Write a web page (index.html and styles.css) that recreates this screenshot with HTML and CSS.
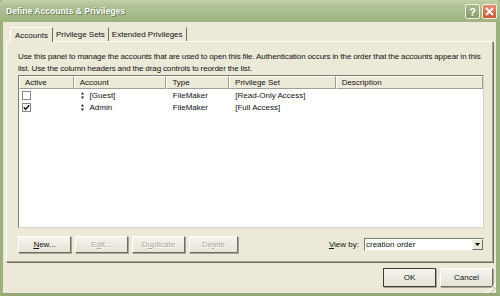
FILE: index.html
```html
<!DOCTYPE html>
<html>
<head>
<meta charset="utf-8">
<link rel="stylesheet" href="styles.css">
</head>
<body>
<div class="window">
  <div class="titlebar">
    <span class="title">Define Accounts &amp; Privileges</span>
    <div class="tb-buttons">
      <span class="tb-btn help">?</span>
      <span class="tb-btn close"><svg width="9" height="9" viewBox="0 0 9 9"><path d="M1 1 L8 8 M8 1 L1 8" stroke="#fff" stroke-width="2"/></svg></span>
    </div>
  </div>
  <div class="client">
    <div class="tabs">
      <span class="tab active">Accounts</span>
      <span class="tab">Privilege Sets</span>
      <span class="tab">Extended Privileges</span>
    </div>
    <div class="panel">
      <p class="intro">Use this panel to manage the accounts that are used to open this file. Authentication occurs in the order that the accounts appear in this<br>list. Use the column headers and the drag controls to reorder the list.</p>
      <div class="list">
        <div class="row head">
          <span class="c c1">Active</span>
          <span class="c c2">Account</span>
          <span class="c c3">Type</span>
          <span class="c c4">Privilege Set</span>
          <span class="c c5">Description</span>
        </div>
        <div class="row">
          <span class="c c1"><span class="cb"></span></span>
          <span class="c c2"><svg class="drag" width="3" height="7" viewBox="0 0 3 7"><path d="M1.5 0 L3 2.5 L0 2.5 Z M1.5 7 L3 4.5 L0 4.5 Z" fill="#222"/></svg>[Guest]</span>
          <span class="c c3">FileMaker</span>
          <span class="c c4">[Read-Only Access]</span>
          <span class="c c5"></span>
        </div>
        <div class="row">
          <span class="c c1"><span class="cb"><svg width="7" height="7" viewBox="0 0 7 7"><path d="M0.8 3.2 L2.6 5.2 L6.2 1.2" stroke="#222" stroke-width="1.6" fill="none"/></svg></span></span>
          <span class="c c2"><svg class="drag" width="3" height="7" viewBox="0 0 3 7"><path d="M1.5 0 L3 2.5 L0 2.5 Z M1.5 7 L3 4.5 L0 4.5 Z" fill="#222"/></svg>Admin</span>
          <span class="c c3">FileMaker</span>
          <span class="c c4">[Full Access]</span>
          <span class="c c5"></span>
        </div>
      </div>
      <div class="actions">
        <span class="btn"><u>N</u>ew...</span>
        <span class="btn disabled">E<u>d</u>it...</span>
        <span class="btn disabled">D<u>u</u>plicate</span>
        <span class="btn disabled narrow">De<u>l</u>ete</span>
        <span class="spacer"></span>
        <span class="viewby"><u>V</u>iew by:</span>
        <span class="combo"><span class="combo-text">creation order</span><span class="combo-btn"><svg width="5" height="3" viewBox="0 0 5 3"><path d="M0 0 L5 0 L2.5 3 Z" fill="#000"/></svg></span></span>
      </div>
    </div>
    <div class="footer">
      <span class="btn default">OK</span>
      <span class="btn">Cancel</span>
    </div>
  </div>
  <div class="grip"></div>
</div>
</body>
</html>
```

FILE: styles.css
```css
* { box-sizing: border-box; }
html, body { margin: 0; padding: 0; }
body {
  width: 500px;
  height: 296px;
  overflow: hidden;
  font-family: "Liberation Sans", Arial, sans-serif;
  font-size: 8px;
  color: #111;
  background: #ece9d8;
}
.window {
  position: relative;
  width: 500px;
  height: 296px;
  display: flex;
  flex-direction: column;
  background: #ece9d8;
  border-left: 3px solid #9cb07c;
  border-right: 4px solid #9cb07c;
  border-bottom: 3px solid #93a874;
}
.titlebar {
  height: 22px;
  margin: 0 -4px 0 -3px;
  padding: 0 3px 0 6px;
  display: flex;
  align-items: center;
  justify-content: space-between;
  background: linear-gradient(#c2d1a8 0%, #aec193 30%, #a6ba89 70%, #9db17f 100%);
  border-radius: 4px 4px 0 0;
}
.title {
  color: #fff;
  font-family: "Liberation Sans", Arial, sans-serif;
  font-weight: bold;
  font-size: 8.6px;
  text-shadow: 1px 1px 0 #6e7f55, 0 0 1px #7c8d62;
}
.tb-buttons { display: flex; gap: 2px; margin-top: 1px; }
.tb-btn {
  width: 15px;
  height: 15px;
  border: 1px solid #eef2e4;
  border-radius: 2px;
  display: flex;
  align-items: center;
  justify-content: center;
  color: #fff;
  font-weight: bold;
  font-size: 11px;
}
.help { background: linear-gradient(#a7bb8f, #849d68); }
.close { background: linear-gradient(#e58d72, #c95635); }
.client {
  flex: 1;
  display: flex;
  flex-direction: column;
  padding: 4px 3px 0 3px;
}
.tabs {
  display: flex;
  height: 15px;
  padding-left: 4px;
  align-items: flex-end;
}
.tab {
  height: 14px;
  padding: 0 3px;
  display: flex;
  align-items: center;
  border-right: 1px solid #716f64;
  border-top: 1px solid #ece9d8;
  white-space: nowrap;
  font-size: 8px;
}
.tab.active {
  height: 15px;
  padding: 0 4px 0 4px;
  border-left: 1px solid #fff;
  border-top: 1px solid #fff;
  margin-bottom: -1px;
  background: #ece9d8;
  position: relative;
  z-index: 1;
}
.panel {
  height: 221px;
  border: 1px solid #a6a393;
  border-top-color: #fff;
  border-left-color: #fff;
  box-shadow: 1px 1px 0 #716f64;
  padding: 9px 8px 0 11px;
  display: flex;
  flex-direction: column;
}
.intro {
  margin: 0;
  line-height: 12px;
  font-size: 8px;
  letter-spacing: -0.09px;
  word-spacing: -0.2px;
  white-space: nowrap;
  height: 23px;
}
.list {
  margin-top: 1px;
  height: 153px;
  background: #fff;
  border: 1px solid #7f7d72;
  border-right-color: #d6d3c6;
  border-bottom-color: #d6d3c6;
  padding: 0 1px;
}
.row {
  display: flex;
  height: 12px;
  align-items: center;
}
.row.head {
  height: 13px;
  background: #ece9d8;
  margin: 0 -1px 0 -1px;
}
.head .c {
  height: 13px;
  border-right: 1px solid #a09e92;
  border-bottom: 1px solid #a09e92;
  border-top: 1px solid #fff;
  border-left: 1px solid #fff;
  padding-left: 5px;
}
.c {
  display: flex;
  align-items: center;
  white-space: nowrap;
  overflow: hidden;
}
.c1 { width: 55px; padding-left: 4px; }
.c2 { width: 93px; padding-left: 8px; }
.c3 { width: 63px; padding-left: 6px; }
.c4 { width: 107px; padding-left: 6px; }
.c5 { width: 148px; }
.row:not(.head) .c1 { padding-left: 2px; }
.row:not(.head) .c2 { padding-left: 6px; }
.cb {
  width: 9px;
  height: 9px;
  border: 1px solid #8a8a84;
  background: #fff;
  display: flex;
  align-items: center;
  justify-content: center;
}
.drag { margin-right: 6px; }
.actions {
  display: flex;
  align-items: center;
  margin-top: 8px;
  height: 17px;
  gap: 4px;
}
.btn {
  width: 53px;
  height: 17px;
  display: flex;
  align-items: center;
  justify-content: center;
  background: linear-gradient(#f4f3ee, #e6e3d6);
  border: 1px solid #fff;
  border-right-color: #716f64;
  border-bottom-color: #716f64;
  box-shadow: 1px 1px 0 #a6a393;
  font-size: 8px;
}
.btn.narrow { width: 49px; }
.btn.disabled { color: #aca899; text-shadow: 1px 1px 0 #fff; }
.spacer { flex: 1; }
.viewby { margin-right: 1px; }
.combo {
  width: 120px;
  height: 13px;
  background: #fff;
  border: 1px solid #7f7d72;
  border-right-color: #ece9d8;
  border-bottom-color: #ece9d8;
  display: flex;
  align-items: center;
  justify-content: space-between;
  padding-left: 1px;
}
.combo-btn {
  width: 11px;
  height: 11px;
  background: #ece9d8;
  border: 1px solid #fff;
  border-right-color: #716f64;
  border-bottom-color: #716f64;
  display: flex;
  align-items: center;
  justify-content: center;
}
.footer {
  display: flex;
  justify-content: flex-end;
  gap: 4px;
  padding: 6px 0 0 0;
}
.footer .btn { width: 53px; height: 19px; }
.btn.default { outline: 1px solid #3d3c36; outline-offset: -1px; }
.grip {
  position: absolute;
  right: 0;
  bottom: 0;
  width: 10px;
  height: 10px;
  background: repeating-linear-gradient(135deg, transparent 0 2px, #b8b4a3 2px 3px, #fff 3px 4px);
  clip-path: polygon(100% 0, 100% 100%, 0 100%);
}
```
